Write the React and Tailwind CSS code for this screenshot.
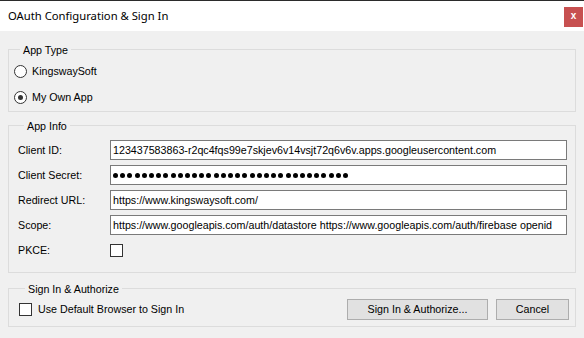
import React from "react";

const F = { fontFamily: '"Liberation Sans", Arial, sans-serif' };

function Group({ label, children, className = "" }) {
  return (
    <div className={"border border-[#dcdcdc] flex flex-col " + className}>
      <div className="-mt-[6px] ml-[6px] px-[3px] w-fit bg-[#f0f0f0] h-[13px] leading-[13px] text-[10.7px] text-black">
        {label}
      </div>
      {children}
    </div>
  );
}

function Radio({ checked, label }) {
  return (
    <div className="flex items-center h-[16px] gap-[5px]">
      <div className="w-[13px] h-[13px] rounded-full border border-[#333333] bg-white flex items-center justify-center">
        {checked && <div className="w-[5px] h-[5px] rounded-full bg-[#333333]" />}
      </div>
      <span className="text-[10.7px] leading-[13px] text-black">{label}</span>
    </div>
  );
}

function Field({ label, children }) {
  return (
    <div className="flex items-center h-[20px]">
      <div className="w-[92px] text-[10.7px] leading-[13px] text-black">{label}</div>
      {children}
    </div>
  );
}

function Input({ value }) {
  return (
    <div className="flex-1 h-[20px] border border-[#7a7a7a] bg-white pl-[2px] flex items-center overflow-hidden whitespace-nowrap text-[10.7px] leading-[13px] text-black">
      {value}
    </div>
  );
}

function Check() {
  return <div className="w-[13px] h-[13px] border border-[#333333] bg-white" />;
}

export default function App() {
  const dots = Array.from({ length: 33 });
  return (
    <div className="w-[584px] h-[338px] bg-[#f0f0f0] flex flex-col overflow-hidden" style={F}>
      <div className="h-[31px] bg-white border-t border-[#2b2b2b] flex items-start justify-between shrink-0">
        <div
          className="pl-[8px] pt-[7px] text-[11.25px] leading-[16px] text-black"
          style={{ fontFamily: '"Noto Sans", "Open Sans", sans-serif' }}
        >
          OAuth Configuration &amp; Sign In
        </div>
        <div className="mt-[6px] mr-[1px] w-[19px] h-[20px] bg-[#c75050] text-white text-[10px] font-bold leading-[18px] text-center">
          x
        </div>
      </div>

      <div className="px-[8px] flex flex-col">
        <Group label="App Type" className="mt-[18px] pl-[5px] pb-[6px]">
          <div className="flex flex-col gap-[10px] mt-[6px]">
            <Radio label="KingswaySoft" />
            <Radio checked label="My Own App" />
          </div>
        </Group>

        <Group label="App Info" className="mt-[13px] pl-[9px] pr-[8px] pb-[12px]">
          <div className="flex flex-col gap-[5px] mt-[7px]">
            <Field label="Client ID:">
              <Input value="123437583863-r2qc4fqs99e7skjev6v14vsjt72q6v6v.apps.googleusercontent.com" />
            </Field>
            <Field label="Client Secret:">
              <div className="flex-1 h-[20px] border border-[#7a7a7a] bg-white pl-[2px] flex items-center gap-[2.2px] overflow-hidden">
                {dots.map((_, i) => (
                  <div key={i} className="w-[5px] h-[5px] rounded-full bg-black shrink-0" />
                ))}
              </div>
            </Field>
            <Field label="Redirect URL:">
              <Input value="https://www.kingswaysoft.com/" />
            </Field>
            <Field label="Scope:">
              <Input value="https://www.googleapis.com/auth/datastore https://www.googleapis.com/auth/firebase openid" />
            </Field>
            <Field label="PKCE:">
              <Check />
            </Field>
          </div>
        </Group>

        <Group label="Sign In & Authorize" className="mt-[15px] pl-[10px] pr-[6px] pb-[6px]">
          <div className="flex items-center justify-between mt-[3px]">
            <div className="flex items-center gap-[6px]">
              <Check />
              <span className="text-[10.7px] leading-[13px] text-black">Use Default Browser to Sign In</span>
            </div>
            <div className="flex items-center gap-[8px]">
              <button className="w-[141px] h-[21px] bg-[#e1e1e1] border border-[#adadad] text-[10.7px] leading-[13px] text-black">
                Sign In &amp; Authorize...
              </button>
              <button className="w-[73px] h-[21px] bg-[#e1e1e1] border border-[#adadad] text-[10.7px] leading-[13px] text-black">
                Cancel
              </button>
            </div>
          </div>
        </Group>
      </div>
    </div>
  );
}
